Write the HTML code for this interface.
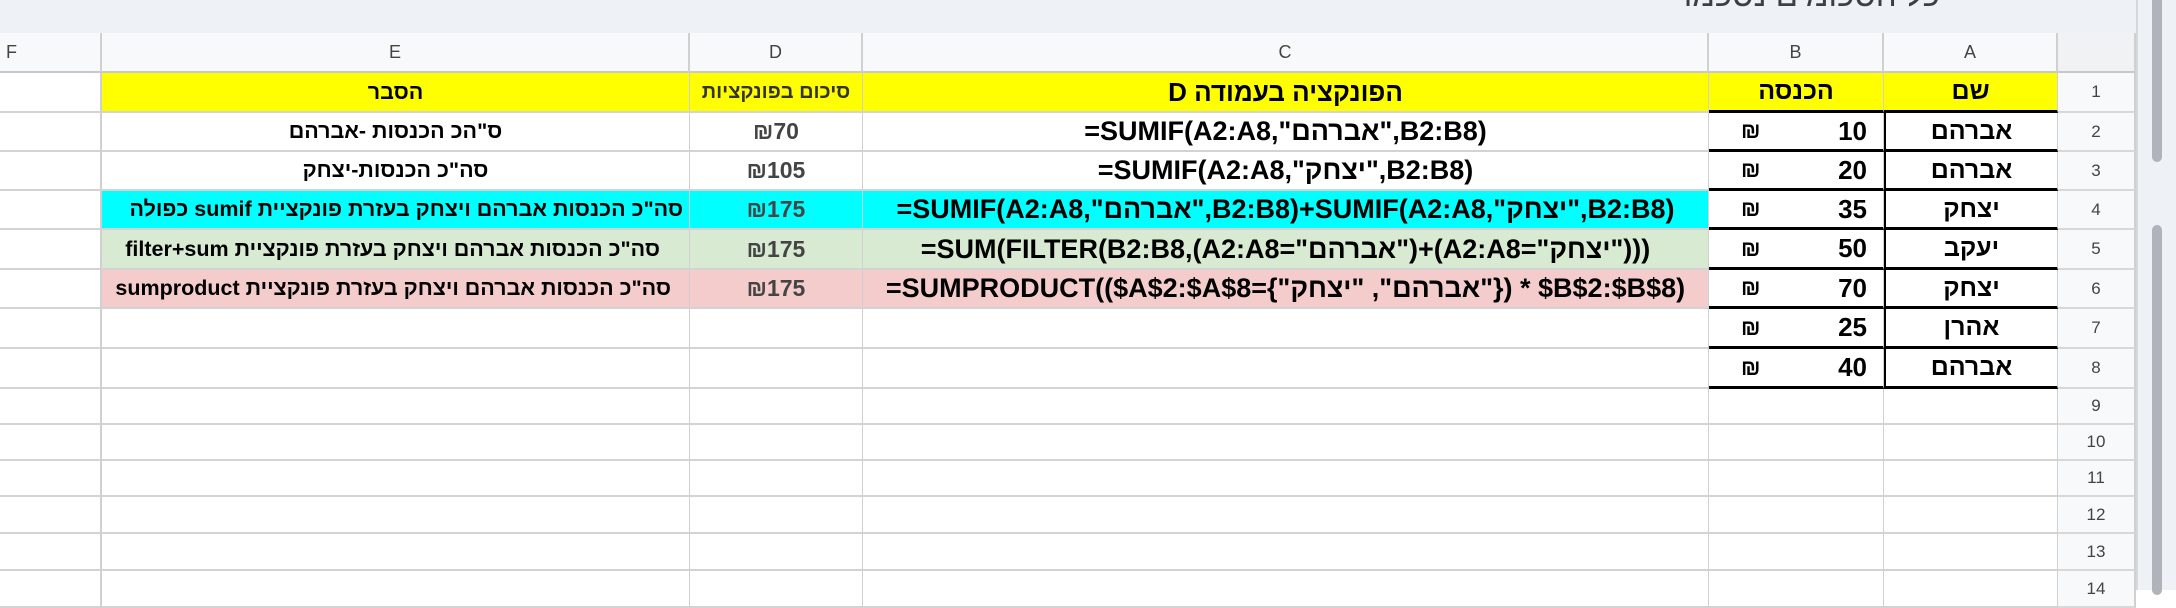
<!DOCTYPE html>
<html><head><meta charset="utf-8">
<style>
body{margin:0;width:2176px;height:590px;overflow:hidden;background:#fff;font-family:"Liberation Sans",Arial,sans-serif;position:relative}
.a{position:absolute;box-sizing:border-box}
.c{position:absolute;box-sizing:border-box;display:flex;align-items:center;justify-content:center;font-weight:bold;font-size:21.5px;color:#000;white-space:nowrap;border-right:1px solid #d0d0d0;border-bottom:2px solid #d3d3d3;overflow:visible}
.h{position:absolute;box-sizing:border-box;display:flex;align-items:center;justify-content:center;font-size:18px;color:#444;background:#f8f9fb;border-right:2px solid #d0d0d0;border-bottom:2px solid #c8c8c8}
.r{position:absolute;box-sizing:border-box;display:flex;align-items:center;justify-content:center;font-size:17px;color:#444;background:#f8f9fb;border-bottom:2px solid #d8d8d8;border-right:2px solid #d0d0d0}
</style></head><body>
<div class="a" style="left:0;top:0;width:2176px;height:33px;background:#eef2f7"></div>
<div class="a" style="left:1655px;top:-24px;width:285px;font-size:33px;color:#3c4043;direction:rtl;white-space:nowrap">כל הסכומים נסכמו</div>
<div class="a" style="left:2136px;top:0;width:40px;height:590px;background:#eef2f7;border-left:2px solid #d6d8dc"></div>
<div class="a" style="left:2152px;top:0;width:10px;height:162px;background:#b0b4ba;border-radius:0 0 5px 5px"></div>
<div class="a" style="left:2152px;top:225px;width:10px;height:370px;background:#b0b4ba;border-radius:5px"></div>

<div class="h" style="left:0;top:33px;width:102px;height:40px;justify-content:flex-start;padding-left:6px">F</div>
<div class="h" style="left:102px;top:33px;width:588px;height:40px">E</div>
<div class="h" style="left:690px;top:33px;width:173px;height:40px">D</div>
<div class="h" style="left:863px;top:33px;width:846px;height:40px">C</div>
<div class="h" style="left:1709px;top:33px;width:175px;height:40px">B</div>
<div class="h" style="left:1884px;top:33px;width:174px;height:40px">A</div>
<div class="h" style="left:2058px;top:33px;width:78px;height:40px;background:#f1f2f4"></div>

<div id="g"></div>
<script>
var tops=[73,113,152,191,230,270,309,349,389,425,461,497,534,571,608];
var cols=[[0,102],[102,588],[690,173],[863,846],[1709,175],[1884,174]];
var bg=['#ffff00','#fff','#fff','#00ffff','#d9ead3','#f4cccc'];
var E=['הסבר','ס"הכ הכנסות -אברהם','סה"כ הכנסות-יצחק','סה"כ הכנסות אברהם ויצחק בעזרת פונקציית sumif כפולה','סה"כ הכנסות אברהם ויצחק בעזרת פונקציית filter+sum','סה"כ הכנסות אברהם ויצחק בעזרת פונקציית sumproduct'];
var D=['סיכום בפונקציות','₪70','₪105','₪175','₪175','₪175'];
var C=['הפונקציה בעמודה D','=SUMIF(A2:A8,"אברהם",B2:B8)','=SUMIF(A2:A8,"יצחק",B2:B8)','=SUMIF(A2:A8,"אברהם",B2:B8)+SUMIF(A2:A8,"יצחק",B2:B8)','=SUM(FILTER(B2:B8,(A2:A8="אברהם")+(A2:A8="יצחק")))','=SUMPRODUCT(($A$2:$A$8={"אברהם", "יצחק"}) * $B$2:$B$8)'];
var A=['שם','אברהם','אברהם','יצחק','יעקב','יצחק','אהרן','אברהם'];
var B=['הכנסה','10','20','35','50','70','25','40'];
var h='';
for(var i=0;i<14;i++){
 var t=tops[i],ht=tops[i+1]-t;
 h+='<div class="r" style="left:2058px;top:'+t+'px;width:78px;height:'+ht+'px">'+(i+1)+'</div>';
 for(var j=0;j<6;j++){
  var c=cols[j],b='#fff',txt='',st='';
  if(i<6&&j>=1&&j<=3)b=bg[i];
  if(i==0&&j>=1)b='#ffff00';
  if(i<6){
   if(j==1){txt=E[i];st='direction:rtl;';if(i>=3){st+='justify-content:flex-start;padding-right:'+(i==3?6:(i==4?29:18))+'px;';}}
   if(j==2){txt=D[i];if(i>0)st='color:#444;direction:ltr;font-size:23px;';else st='direction:rtl;color:#333;font-size:20px;';}
   if(j==3){txt=C[i];st=i==0?'direction:rtl;font-size:26px;':'direction:ltr;font-size:27px;';}
  }
  if(i<8&&j==5){txt=A[i];st='direction:rtl;font-size:25px;';}
  if(i<8&&j==4){if(i==0){txt=B[0];st='direction:rtl;font-size:25px;';}else{txt='<span style="position:absolute;left:32px;font-size:22px">₪</span><span style="position:absolute;right:16px;font-size:26px">'+B[i]+'</span>';}}
  if(i<8&&(j==4||j==5)){st+='border-bottom:3px solid #000;';if(j==5&&i>0)st+='border-left:2px solid #000;';}
  if(j==0)st+='border-right:2px solid #d0d0d0;';
  h+='<div class="c" style="left:'+c[0]+'px;top:'+t+'px;width:'+c[1]+'px;height:'+ht+'px;background:'+b+';'+st+'">'+txt+'</div>';
 }
}
document.getElementById('g').innerHTML=h;
</script>
</body></html>
